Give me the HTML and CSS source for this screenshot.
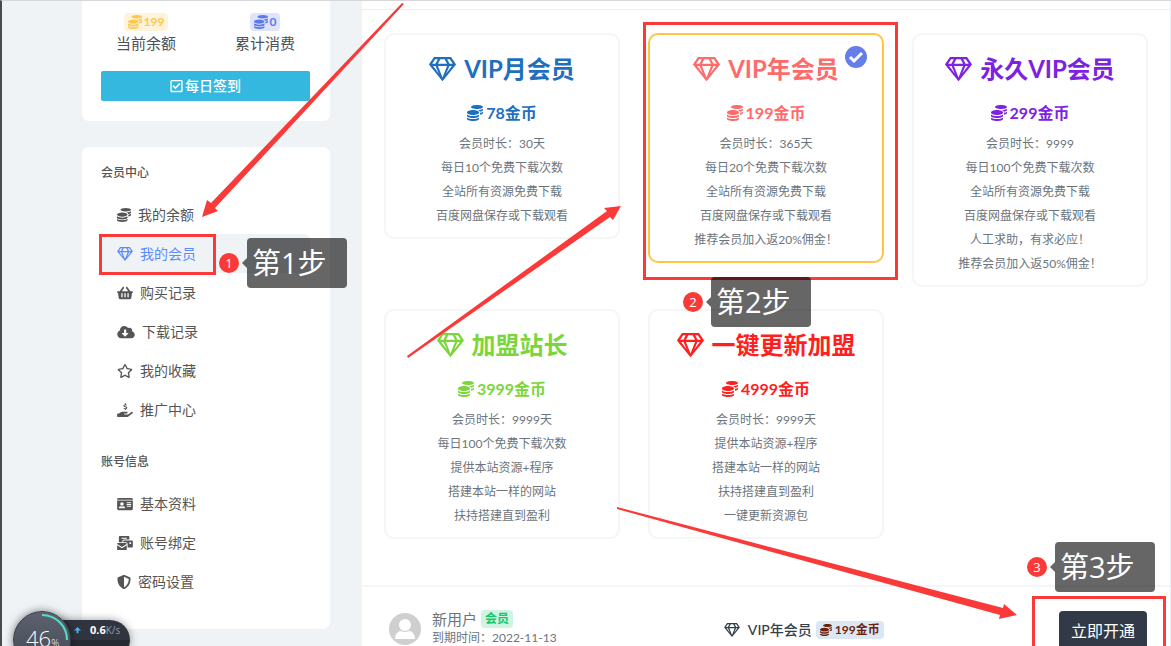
FILE: index.html
```html
<!DOCTYPE html>
<html lang="zh-CN">
<head>
<meta charset="utf-8">
<title>我的会员</title>
<link rel="stylesheet" href="styles.css">
</head>
<body>
<svg class="sprite" aria-hidden="true">
  <symbol id="coins" viewBox="0 0 512 512"><path d="M0 405.3V448c0 35.3 86 64 192 64s192-28.7 192-64v-42.7C342.7 434.4 267.2 448 192 448S41.3 434.4 0 405.3zM320 128c106 0 192-28.7 192-64S426 0 320 0 128 28.7 128 64s86 64 192 64zM0 300.4V352c0 35.3 86 64 192 64s192-28.7 192-64v-51.6c-41.3 34-116.9 51.6-192 51.6S41.3 334.4 0 300.4zm416 11c57.3-11.1 96-31.7 96-55.4v-42.7c-23.2 16.4-57.3 27.6-96 34.5v63.6zM192 160C86 160 0 195.8 0 240s86 80 192 80 192-35.8 192-80-86-80-192-80zm219.3 56.3c60-10.8 100.7-32 100.7-56.3v-42.7c-35.5 25.1-96.5 38.6-160.7 41.8 29.5 14.3 51.2 33.5 60 57.2z"/></symbol>
  <symbol id="gem" viewBox="0 0 576 512"><path d="M464 0H112c-4 0-7.7 2-9.9 5.4L1.7 152.3c-2.9 4.4-2.3 10.2 1.4 14.1l276 340.8c4.8 6.4 13.1 6.4 17.8 0l276-340.8c3.4-3.8 4-9.7 1.1-14.1L473.9 5.4C471.7 2 468 0 464 0zm-19.6 48l63.3 96h-68.4l-51.7-96h56.8zm-202.1 0h91.3l51.7 96H190.7l51.6-96zm-111.1 0h56.8l-51.7 96H67.9l63.3-96zm-43 144h51.4L208 352 88.2 192zm102.9 0h193.6L288 435.3 191.2 192zM368 352l68.2-160h51.4L368 352z"/></symbol>
  <symbol id="basket" viewBox="0 0 576 512"><path d="M576 216v16c0 13.255-10.745 24-24 24h-8l-26.113 182.788C514.509 462.435 494.257 480 470.37 480H105.63c-23.887 0-44.139-17.565-47.518-41.212L32 256h-8c-13.255 0-24-10.745-24-24v-16c0-13.255 10.745-24 24-24h67.341l106.78-146.821c10.395-14.292 30.407-17.453 44.701-7.058 14.293 10.395 17.453 30.408 7.058 44.701L170.477 192h235.046L326.12 82.821c-10.395-14.292-7.234-34.306 7.059-44.701 14.291-10.395 34.306-7.235 44.701 7.058L484.659 192H552c13.255 0 24 10.745 24 24zM312 392V280c0-13.255-10.745-24-24-24s-24 10.745-24 24v112c0 13.255 10.745 24 24 24s24-10.745 24-24zm112 0V280c0-13.255-10.745-24-24-24s-24 10.745-24 24v112c0 13.255 10.745 24 24 24s24-10.745 24-24zm-224 0V280c0-13.255-10.745-24-24-24s-24 10.745-24 24v112c0 13.255 10.745 24 24 24s24-10.745 24-24z"/></symbol>
  <symbol id="cloud" viewBox="0 0 640 512"><path d="M537.6 226.6c4.1-10.7 6.4-22.4 6.4-34.6 0-53-43-96-96-96-19.7 0-38.1 6-53.3 16.2C367 64.2 315.3 32 256 32c-88.4 0-160 71.6-160 160 0 2.7.1 5.4.2 8.1C40.2 219.8 0 273.2 0 336c0 79.5 64.5 144 144 144h368c70.7 0 128-57.3 128-128 0-61.9-44-113.6-102.4-125.4zm-132.9 88.7L299.3 420.7c-6.2 6.2-16.4 6.2-22.6 0L171.3 315.3c-10.1-10.1-2.9-27.3 11.3-27.3H248V176c0-8.8 7.2-16 16-16h48c8.8 0 16 7.2 16 16v112h65.4c14.2 0 21.4 17.2 11.3 27.3z"/></symbol>
  <symbol id="star" viewBox="0 0 576 512"><path d="M528.1 171.5L382 150.2 316.7 17.8c-11.7-23.6-45.6-23.9-57.4 0L194 150.2 47.9 171.5c-26.2 3.8-36.7 36.1-17.7 54.6l105.7 103-25 145.5c-4.5 26.3 23.2 46 46.4 33.7L288 439.6l130.7 68.7c23.2 12.2 50.9-7.4 46.4-33.7l-25-145.5 105.7-103c19-18.5 8.5-50.8-17.7-54.6zM388.6 312.3l23.7 138.4L288 385.4l-124.3 65.3 23.7-138.4-100.6-98 139-20.2 62.2-126 62.2 126 139 20.2-100.6 98z"/></symbol>
  <symbol id="hand" viewBox="0 0 576 512"><path d="M565.3 328.1c-11.8-10.7-30.2-10-42.6 0L430.3 402c-11.3 9.1-25.4 14-40 14H272c-8.8 0-16-7.2-16-16s7.2-16 16-16h78.3c15.9 0 30.7-10.9 33.3-26.6 3.3-20-12.1-37.4-31.6-37.4H192c-27 0-53.1 9.3-74.1 26.3L71.4 384H16c-8.8 0-16 7.2-16 16v96c0 8.8 7.2 16 16 16h356.8c14.5 0 28.6-4.9 40-14L564 377c15.2-12.1 16.4-35.3 1.3-48.9z"/><path d="M352 82c-18-22-104-30-104 18 0 50 108 24 108 76 0 48-92 42-112 14M300 10v44M300 214v42" fill="none" stroke="currentColor" stroke-width="38"/></symbol>
  <symbol id="idcard" viewBox="0 0 576 512"><path fill-rule="evenodd" d="M48 32h480q48 0 48 48v16H0V80q0-48 48-48zM0 128h576v304q0 48-48 48H48q-48 0-48-48zM176 192a64 64 0 1 0 0 128 64 64 0 1 0 0-128zM64 414h224c8-44-24-78-56-78q-56 20-112 0c-32 0-64 34-56 78zM352 192v32h160v-32zM352 256v32h160v-32zM352 320v32h160v-32z"/></symbol>
  <symbol id="mail" viewBox="0 0 576 512"><path fill-rule="evenodd" d="M96 0h320q32 0 32 32v96H256q-64 0-64 64v32H64V32Q64 0 96 0zM160 64v36h192V64z"/><path fill-rule="evenodd" d="M256 160h288q32 0 32 32v192q0 32-32 32H384V288q0-64-64-64h-96v-32q0-32 32-32zM448 224v64h64v-64z"/><path d="M32 256h288q32 0 32 32L176 398 0 288q0-32 32-32zM0 336l176 110 176-110v144q0 32-32 32H32q-32 0-32-32z"/></symbol>
  <symbol id="shield" viewBox="0 0 512 512"><path fill-rule="evenodd" d="M256 0q12 0 20 4l192 80q28 12 28 44c0 202-96 322-220 380q-20 8-40 0C108 450 16 330 16 128q0-32 28-44L236 4q8-4 20-4zM256 68v376c104-56 174-150 176-302z"/></symbol>
  <symbol id="checkbox" viewBox="0 0 448 512"><path d="M400 32H48C21.49 32 0 53.49 0 80v352c0 26.51 21.49 48 48 48h352c26.51 0 48-21.49 48-48V80c0-26.51-21.49-48-48-48zm0 400H48V80h352v352zm-35.864-241.724L191.547 361.48c-4.705 4.667-12.303 4.637-16.97-.068l-90.781-91.516c-4.667-4.705-4.637-12.303.069-16.971l22.719-22.536c4.705-4.667 12.303-4.637 16.97.069l59.792 60.277 141.352-140.216c4.705-4.667 12.303-4.637 16.97.068l22.536 22.718c4.667 4.706 4.637 12.304-.068 16.971z"/></symbol>
</svg>

<div class="page">
  <aside class="sidebar">
    <section class="panel wallet">
      <div class="stats">
        <div class="stat"><span class="badge badge-gold"><svg class="i14"><use href="#coins"/></svg>199</span><span>当前余额</span></div>
        <div class="stat"><span class="badge badge-blue"><svg class="i14"><use href="#coins"/></svg>0</span><span>累计消费</span></div>
      </div>
      <button class="checkin" type="button"><svg class="i13"><use href="#checkbox"/></svg>每日签到</button>
    </section>
    <nav class="panel menu">
      <h2>会员中心</h2>
      <ul>
        <li><a href="#"><svg class="i14"><use href="#coins"/></svg>我的余额</a></li>
        <li><a href="#" class="active"><svg class="i16"><use href="#gem"/></svg>我的会员</a></li>
        <li><a href="#"><svg class="i16"><use href="#basket"/></svg>购买记录</a></li>
        <li><a href="#"><svg class="i18"><use href="#cloud"/></svg>下载记录</a></li>
        <li><a href="#"><svg class="i16"><use href="#star"/></svg>我的收藏</a></li>
        <li><a href="#"><svg class="i16"><use href="#hand"/></svg>推广中心</a></li>
      </ul>
      <h2>账号信息</h2>
      <ul>
        <li><a href="#"><svg class="i16"><use href="#idcard"/></svg>基本资料</a></li>
        <li><a href="#"><svg class="i16"><use href="#mail"/></svg>账号绑定</a></li>
        <li><a href="#"><svg class="i14"><use href="#shield"/></svg>密码设置</a></li>
      </ul>
    </nav>
  </aside>

  <main class="content">
    <form class="plans">
      <label class="plan blue"><input type="radio" name="plan">
        <span class="title"><svg><use href="#gem"/></svg>VIP月会员</span>
        <span class="price"><svg><use href="#coins"/></svg>78金币</span>
        <span class="line">会员时长：30天</span><span class="line">每日10个免费下载次数</span><span class="line">全站所有资源免费下载</span><span class="line">百度网盘保存或下载观看</span>
      </label>
      <label class="plan coral selected"><input type="radio" name="plan" checked>
        <svg class="tick" viewBox="0 0 22 22"><circle cx="11" cy="11" r="11"/><path d="M5 11l4 4 8-8"/></svg>
        <span class="title"><svg><use href="#gem"/></svg>VIP年会员</span>
        <span class="price"><svg><use href="#coins"/></svg>199金币</span>
        <span class="line">会员时长：365天</span><span class="line">每日20个免费下载次数</span><span class="line">全站所有资源免费下载</span><span class="line">百度网盘保存或下载观看</span><span class="line">推荐会员加入返20%佣金！</span>
      </label>
      <label class="plan purple"><input type="radio" name="plan">
        <span class="title"><svg><use href="#gem"/></svg>永久VIP会员</span>
        <span class="price"><svg><use href="#coins"/></svg>299金币</span>
        <span class="line">会员时长：9999</span><span class="line">每日100个免费下载次数</span><span class="line">全站所有资源免费下载</span><span class="line">百度网盘保存或下载观看</span><span class="line">人工求助，有求必应！</span><span class="line">推荐会员加入返50%佣金！</span>
      </label>
      <label class="plan green"><input type="radio" name="plan">
        <span class="title"><svg><use href="#gem"/></svg>加盟站长</span>
        <span class="price"><svg><use href="#coins"/></svg>3999金币</span>
        <span class="line">会员时长：9999天</span><span class="line">每日100个免费下载次数</span><span class="line">提供本站资源+程序</span><span class="line">搭建本站一样的网站</span><span class="line">扶持搭建直到盈利</span>
      </label>
      <label class="plan red"><input type="radio" name="plan">
        <span class="title"><svg><use href="#gem"/></svg>一键更新加盟</span>
        <span class="price"><svg><use href="#coins"/></svg>4999金币</span>
        <span class="line">会员时长：9999天</span><span class="line">提供本站资源+程序</span><span class="line">搭建本站一样的网站</span><span class="line">扶持搭建直到盈利</span><span class="line">一键更新资源包</span>
      </label>
    </form>
    <footer class="checkout">
      <div class="user">
        <svg class="avatar" viewBox="0 0 32 32"><circle cx="16" cy="16" r="16" fill="#cfcfcf"/><circle cx="16" cy="12" r="6" fill="#fff"/><path d="M6 26c0-5 3-8 6-8q4 2 8 0c3 0 6 3 6 8z" fill="#fff"/></svg>
        <div>
          <div class="name">新用户<span class="badge badge-green">会员</span></div>
          <div class="expire">到期时间：2022-11-13</div>
        </div>
      </div>
      <div class="chosen"><svg class="i16"><use href="#gem"/></svg><span>VIP年会员</span><span class="badge badge-price"><svg class="i12"><use href="#coins"/></svg>199金币</span></div>
      <button class="open" type="button">立即开通</button>
    </footer>
  </main>
</div>

<div class="notes">
  <svg class="arrows" viewBox="0 0 1171 646">
    <path d="M402 3L211 203L207 200L202 217L218 211L215 208L404 4Z"/>
    <path d="M407 356L607 211L604 208L621 206L613 220L610 217L408 358Z"/>
    <path d="M617 507L1003 608L1004 604L1017 615L999 619L1000 615L617 509Z"/>
  </svg>
  <div class="frame frame1"></div>
  <div class="frame frame2"></div>
  <div class="frame frame3"></div>
  <div class="step step1"><span class="dot">1</span><span class="tip">第1步</span></div>
  <div class="step step2"><span class="dot">2</span><span class="tip">第2步</span></div>
  <div class="step step3"><span class="dot">3</span><span class="tip">第3步</span></div>
</div>

<div class="monitor">
  <div class="rate"><svg viewBox="0 0 8 8"><path d="M4 0l4 4H5v3H3V4H0z"/></svg><b>0.6</b><span>K/s</span></div>
  <div class="gauge"><svg viewBox="0 0 58 58"><path d="M29 4A25 25 0 0 1 54 29"/></svg><span>46</span><small>%</small></div>
</div>
</body>
</html>
```
FILE: styles.css
```css
* { box-sizing: border-box; }
html { height: 100%; overflow: hidden; }
body {
  position: relative;
  height: 100%;
  margin: 0;
  overflow: hidden;
  background: #eff3f5;
  color: #555;
  font: 14px/20px Lato, "Noto Sans CJK SC", sans-serif;
}
svg { fill: currentColor; flex: none; }
button { border: 0; font: inherit; cursor: pointer; }
a { color: inherit; text-decoration: none; }
ul { list-style: none; margin: 0; padding: 0; }
.sprite { position: absolute; width: 0; height: 0; }
.i12 { width: 12px; height: 12px; }
.i13 { width: 13px; height: 14px; }
.i14 { width: 14px; height: 14px; }
.i16 { width: 16px; height: 14px; }
.i18 { width: 18px; height: 14px; }

.page {
  display: flex;
  gap: 32px;
  min-height: 100%;
  padding-left: 80px;
  border-left: 2px solid #4b4b4f;
  border-top: 1px solid #d5d7da;
}
.sidebar { flex: none; width: 248px; }
.panel { background: #fff; border-radius: 7px; padding: 0 20px; }
.wallet { padding: 12px 20px 20px 19px; border-radius: 0 0 7px 7px; }
.stats { display: flex; justify-content: space-between; padding: 0 15px; }
.stat { display: flex; flex-direction: column; align-items: center; font-size: 15px; line-height: 24px; color: #4d5259; }
.badge {
  display: inline-flex;
  align-items: center;
  gap: 2px;
  padding: 0 4px;
  border-radius: 4px;
  font-size: 12px;
  font-weight: 700;
  line-height: 18px;
}
.badge-gold { color: #fdc84b; background: #fff3dc; }
.badge-blue { color: #5a78f0; background: #dfe4fb; }
.badge-green { color: #14c76f; background: #d0f4e2; }
.badge-price { color: #6b220c; background: #dce7f4; gap: 3px; }
.checkin {
  display: flex;
  align-items: center;
  justify-content: center;
  gap: 2px;
  width: 100%;
  height: 30px;
  margin-top: 16px;
  border-radius: 2px;
  background: #35b8e0;
  color: #fff;
  font-weight: 500;
}
.menu { margin-top: 26px; padding: 16px 20px 28px 19px; }
.menu h2 { margin: 0 0 12px; font-size: 12px; font-weight: 500; line-height: 20px; }
.menu h2:nth-of-type(2) { margin-top: 23px; }
.menu a { display: flex; align-items: center; gap: 7px; height: 39px; padding-left: 16px; border-radius: 6px; }
.menu a.active { background: #eff3f5; color: #5b8cff; }

.content { flex: 1; padding-top: 8px; background: #fff; border-right: 1px solid #eceef8; }
.plans {
  display: grid;
  grid-template-columns: repeat(3, 1fr);
  gap: 22px 28px;
  align-items: start;
  padding: 23px 22px 46px;
  border-top: 1px solid #ebeef2;
}
.plan {
  position: relative;
  display: flex;
  flex-direction: column;
  align-items: center;
  padding: 16px 8px 9px;
  border: 2px solid #f5f5f5;
  border-radius: 10px;
}
.plan input { position: absolute; opacity: 0; }
.plan.selected { border-color: #fdc543; }
.title, .price { display: flex; align-items: center; font-weight: 700; }
.title { gap: 8px; font-size: 24px; line-height: 36px; margin-bottom: 14px; }
.title svg { width: 27px; height: 24px; }
.price { gap: 3px; font-size: 16px; line-height: 24px; margin-bottom: 7px; }
.price svg { width: 16px; height: 16px; }
.line { font-size: 12px; line-height: 24px; color: #6c757d; }
.tick { position: absolute; top: 11px; right: 15px; width: 22px; height: 22px; fill: #667eea; }
.tick path { fill: none; stroke: #fff; stroke-width: 3; }
.blue { color: #1f6fc0; }
.coral { color: #ff6b6b; }
.purple { color: #7d22e0; }
.green { color: #7bd63c; }
.red { color: #ff1f1f; }

.checkout {
  display: flex;
  align-items: flex-start;
  justify-content: space-between;
  padding: 22px 23px 22px 27px;
  border-top: 2px solid #f4f4fb;
}
.user { display: flex; gap: 11px; color: #6c757d; }
.avatar { width: 32px; height: 32px; margin-top: 4px; }
.name { display: flex; align-items: center; gap: 4px; font-size: 15px; line-height: 20px; }
.expire { font-size: 12px; line-height: 18px; }
.chosen { display: flex; align-items: center; gap: 4px; margin: 11px 8px 0 0; color: #343f4c; font-weight: 500; }
.chosen > svg { margin-right: 4px; }
.open { height: 40px; padding: 0 12px; margin-top: 2px; border-radius: 4px; background: #313a46; color: #fff; font-size: 16px; }

/* Step-by-step guide drawn over the page */
.notes { position: absolute; inset: 0; pointer-events: none; }
.arrows { position: absolute; left: 0; top: 0; width: 1171px; height: 646px; fill: #fa3a38; }
.frame { position: absolute; border: 3px solid #fa3a38; }
.frame1 { left: 99px; top: 234px; width: 117px; height: 41px; }
.frame2 { left: 643px; top: 22px; width: 255px; height: 258px; }
.frame3 { left: 1032px; top: 596px; width: 134px; height: 70px; }
.step { position: absolute; display: flex; align-items: center; gap: 8px; }
.step1 { left: 219px; top: 238px; }
.step2 { left: 683px; top: 277px; }
.step3 { left: 1027px; top: 542px; }
.dot { width: 20px; border-radius: 50%; background: #fa3a38; color: #fff; font: 13px/20px "Open Sans", sans-serif; text-align: center; }
.tip {
  position: relative;
  width: 100px;
  height: 50px;
  padding-left: 5px;
  border-radius: 4px;
  background: rgba(0, 0, 0, .6);
  color: #fff;
  font: 29px/50px "Open Sans", "Noto Sans CJK SC", sans-serif;
}
.tip::before { content: ""; position: absolute; left: -5px; top: 20px; border: 5px solid transparent; border-left: 0; border-right-color: rgba(0, 0, 0, .6); }

/* Desktop speed widget */
.monitor { position: absolute; left: 13px; top: 611px; width: 117px; height: 58px; color: #fff; }
.rate {
  position: absolute;
  left: 28px;
  right: 0;
  top: 9px;
  height: 40px;
  display: flex;
  align-items: flex-start;
  padding: 1px 9px 0 33px;
  border-radius: 20px;
  background: linear-gradient(#30343f 20px, #262a33 20px);
  box-shadow: 0 0 8px rgba(0, 0, 0, .4);
  font: 11px/18px "Open Sans", sans-serif;
}
.rate svg { width: 7px; height: 7px; margin: 6px 9px 0 0; fill: #4db4ee; }
.rate span { color: #9a9da5; font-size: 10px; }
.gauge {
  position: absolute;
  left: 0;
  top: 0;
  width: 58px;
  height: 58px;
  padding-left: 12px;
  border-radius: 50%;
  background: linear-gradient(#5d6270, #434754);
  border: 1px solid #3a3d47;
  box-shadow: 0 0 8px rgba(0, 0, 0, .5);
  font: 300 22px/52px "Open Sans", sans-serif;
}
.gauge svg { position: absolute; left: -1px; top: -1px; width: 58px; height: 58px; fill: none; stroke: #52e0c0; stroke-width: 2; }
.gauge small { font-size: 10px; }
```
